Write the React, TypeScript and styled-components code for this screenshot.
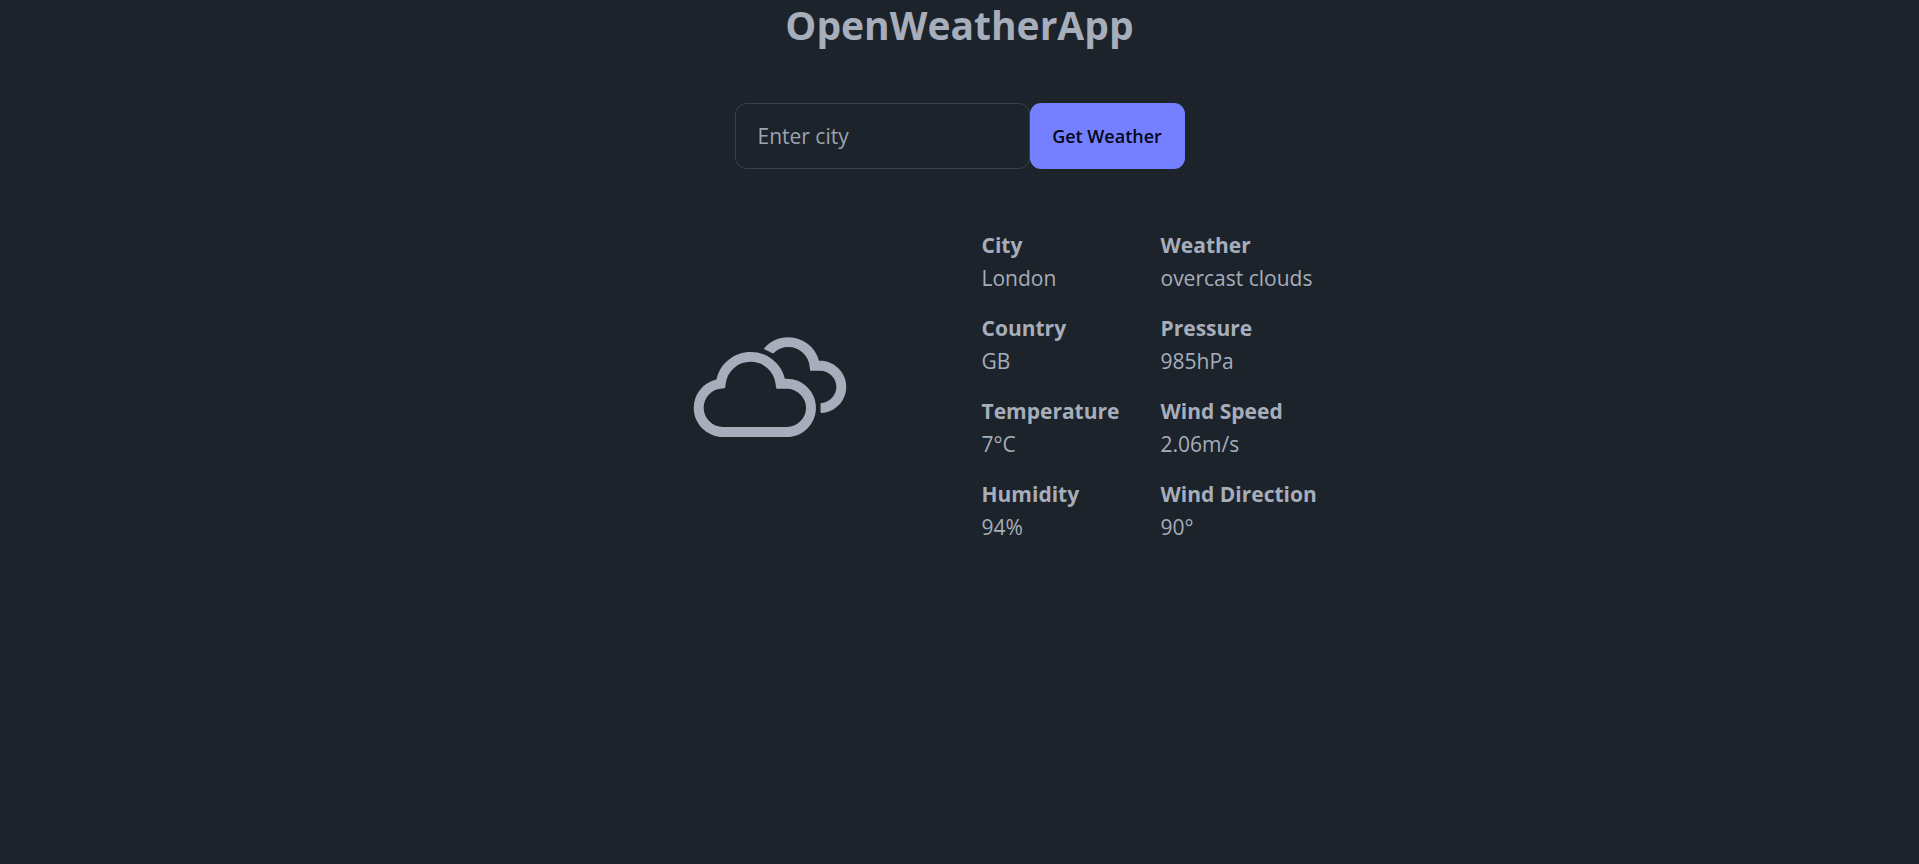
import React, { useState } from "react";
import styled, { createGlobalStyle } from "styled-components";
import { WiCloudy } from "react-icons/wi";

const GlobalStyle = createGlobalStyle`
  *, *::before, *::after { box-sizing: border-box; }
  body {
    margin: 0;
    background: #1d232a;
    color: #a6adbb;
    font-family: "Segoe UI", "Open Sans", "Noto Sans", sans-serif;
    font-size: 21px;
    line-height: 33px;
  }
`;

const Page = styled.main`
  display: flex;
  flex-direction: column;
  align-items: center;
  min-height: 100vh;
`;

const Title = styled.h1`
  margin: 0;
  font-size: 39px;
  line-height: 50px;
  font-weight: 700;
`;

const SearchForm = styled.form`
  display: flex;
  margin-top: 53px;
`;

const CityInput = styled.input`
  width: 295px;
  height: 66px;
  padding: 0 22px;
  border: 1px solid #383f47;
  border-radius: 11px;
  background: transparent;
  color: inherit;
  font: inherit;

  &::placeholder {
    color: #9ca3af;
    opacity: 1;
  }
`;

const SubmitButton = styled.button`
  min-width: 155px;
  height: 66px;
  padding: 0 22px;
  border: 0;
  border-radius: 11px;
  background: #7480ff;
  color: #050617;
  font: inherit;
  font-size: 18px;
  font-weight: 600;
  cursor: pointer;
`;

const Report = styled.section`
  display: grid;
  grid-template-columns: 1fr 1fr;
  align-items: center;
  justify-items: center;
  column-gap: 44px;
  margin-top: 60px;
`;

const CloudIcon = styled(WiCloudy)`
  width: 206px;
  height: 206px;
`;

const Facts = styled.dl`
  display: grid;
  grid-template-columns: 179px 157px;
  row-gap: 17px;
  margin: 0;
  padding-bottom: 7px;
`;

const Fact = styled.div`
  white-space: nowrap;
`;

const FactName = styled.dt`
  font-weight: 700;
`;

const FactValue = styled.dd`
  margin: 0;
`;

const facts = [
  ["City", "London"],
  ["Weather", "overcast clouds"],
  ["Country", "GB"],
  ["Pressure", "985hPa"],
  ["Temperature", "7°C"],
  ["Wind Speed", "2.06m/s"],
  ["Humidity", "94%"],
  ["Wind Direction", "90°"],
];

export default function App() {
  const [city, setCity] = useState("");

  return (
    <>
      <GlobalStyle />
      <Page>
        <Title>OpenWeatherApp</Title>
        <SearchForm onSubmit={(event) => event.preventDefault()}>
          <CityInput
            type="text"
            aria-label="City"
            placeholder="Enter city"
            value={city}
            onChange={(event) => setCity(event.target.value)}
          />
          <SubmitButton type="submit">Get Weather</SubmitButton>
        </SearchForm>
        <Report>
          <CloudIcon aria-hidden="true" />
          <Facts>
            {facts.map(([name, value]) => (
              <Fact key={name}>
                <FactName>{name}</FactName>
                <FactValue>{value}</FactValue>
              </Fact>
            ))}
          </Facts>
        </Report>
      </Page>
    </>
  );
}
